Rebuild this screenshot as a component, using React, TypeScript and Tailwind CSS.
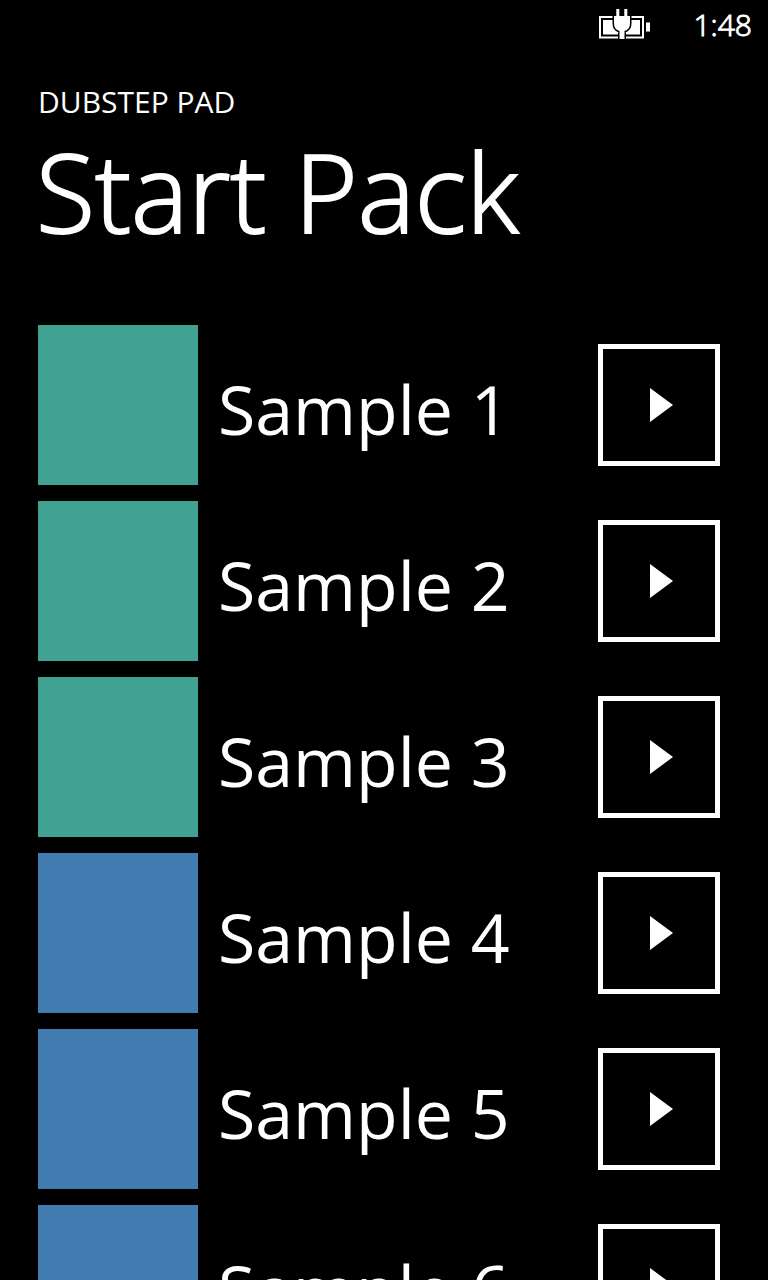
import React, { useState } from 'react';

interface Sample {
  id: number;
  name: string;
  color: string;
}

const SAMPLES: Sample[] = [
  { id: 1, name: 'Sample 1', color: 'bg-[#40a392]' },
  { id: 2, name: 'Sample 2', color: 'bg-[#40a392]' },
  { id: 3, name: 'Sample 3', color: 'bg-[#40a392]' },
  { id: 4, name: 'Sample 4', color: 'bg-[#417cb0]' },
  { id: 5, name: 'Sample 5', color: 'bg-[#417cb0]' },
  { id: 6, name: 'Sample 6', color: 'bg-[#417cb0]' },
];

function ChargingIcon() {
  return (
    <svg width="52" height="30" viewBox="0 0 52 30" role="img" aria-label="Charging">
      {/* Battery shell and charge */}
      <path d="M0 7h45v22.500H0z" fill="#fff" />
      <path d="M2 9h41v18.500H2z" fill="#000" />
      <path d="M4 11h37v14.500H4z" fill="#fff" />
      <path d="M47 13.500h4v9h-4z" fill="#fff" />

      {/* Plug, with a dark edge around it */}
      <path
        d="M17.300 0h3v7h5V0h3v7H31v7.500c0 4-2 6.500-5.500 7.500v8h-5v-8c-3.500-1-5.500-3.500-5.500-7.500V7h2.300z"
        fill="#fff"
        stroke="#000"
        strokeWidth="3"
        paintOrder="stroke"
      />
    </svg>
  );
}

function StatusBar() {
  return (
    <div className="flex h-12 items-center justify-end gap-[42px] pr-4">
      <ChargingIcon />
      <time className="text-[30px] font-light [-webkit-text-stroke:1px_white]">1:48</time>
    </div>
  );
}

interface SampleRowProps {
  sample: Sample;
  isPlaying: boolean;
  onToggle: () => void;
}

function SampleRow({ sample, isPlaying, onToggle }: SampleRowProps) {
  return (
    <li className="flex items-center">
      <div className={`size-40 shrink-0 ${sample.color}`} />
      <span className="ml-5 flex-1 truncate pt-2 text-[68px] leading-24">{sample.name}</span>
      <button
        type="button"
        aria-label={`Play ${sample.name}`}
        aria-pressed={isPlaying}
        onClick={onToggle}
        className="flex size-[122px] shrink-0 items-center justify-center border-5 border-white"
      >
        <svg width="24" height="36" viewBox="0 0 24 36" className="ml-1" aria-hidden="true">
          <path d="M1 1l23 17L1 35z" fill="#fff" />
        </svg>
      </button>
    </li>
  );
}

export default function App() {
  const [playing, setPlaying] = useState<number | null>(null);

  return (
    <div className="flex h-screen flex-col bg-black font-['Open_Sans','Noto_Sans',sans-serif] text-white">
      <StatusBar />

      <header className="px-9 pt-8">
        <p className="pl-[2px] text-[30px] leading-11">DUBSTEP PAD</p>
        <h1 className="text-[108px] leading-34 font-light [-webkit-text-stroke:2px_white]">
          Start Pack
        </h1>
      </header>

      {/* Sample list */}
      <ul className="mt-[65px] flex min-h-0 flex-1 flex-col gap-4 overflow-y-auto pr-12 pl-[38px] [scrollbar-width:none]">
        {SAMPLES.map((sample) => (
          <SampleRow
            key={sample.id}
            sample={sample}
            isPlaying={playing === sample.id}
            onToggle={() => setPlaying(playing === sample.id ? null : sample.id)}
          />
        ))}
      </ul>
    </div>
  );
}
